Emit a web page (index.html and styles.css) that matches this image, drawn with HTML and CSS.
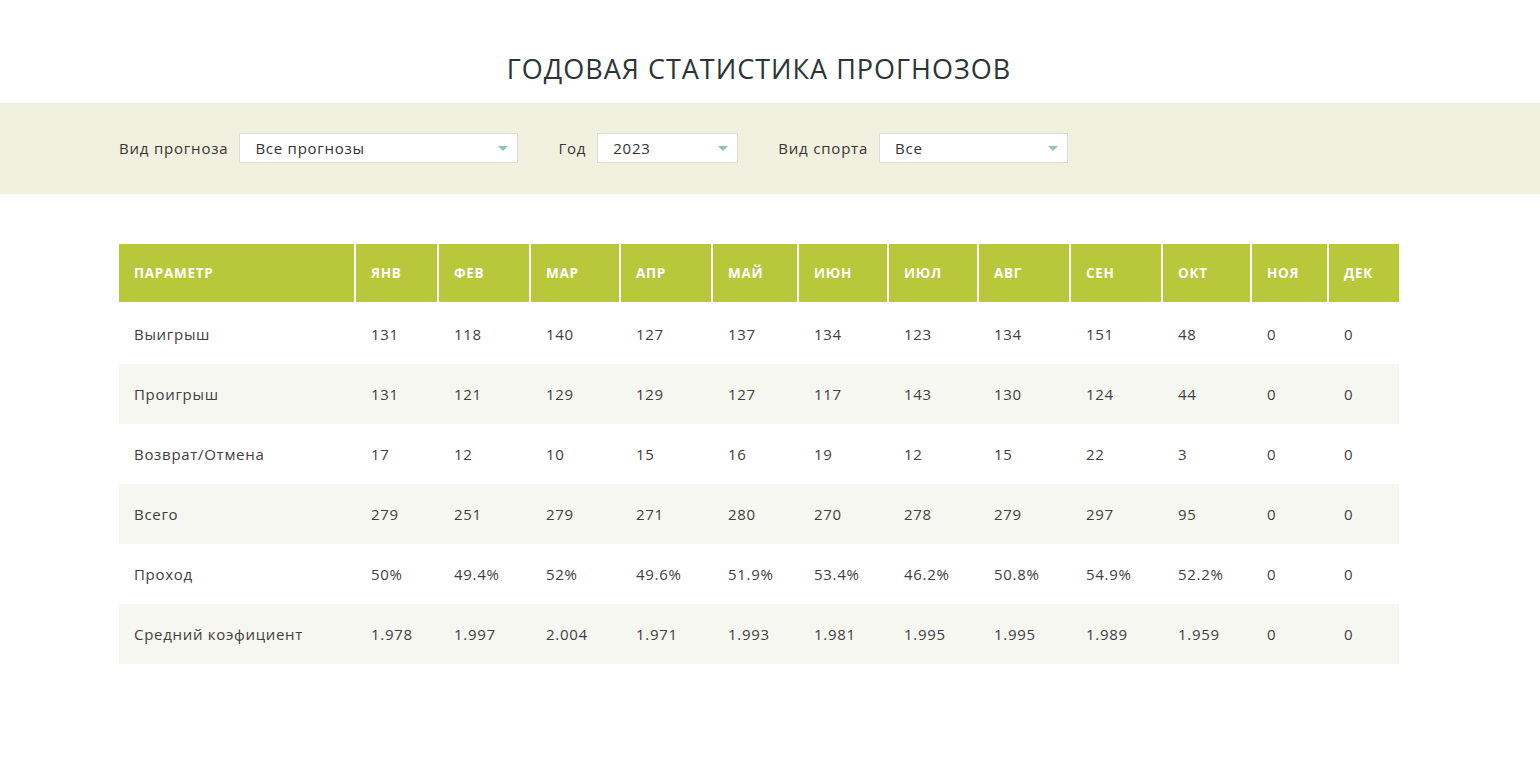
FILE: index.html
```html
<!DOCTYPE html>
<html lang="ru">
<head>
<meta charset="utf-8">
<title>Годовая статистика прогнозов</title>
<link rel="stylesheet" href="styles.css">
</head>
<body>
<header class="wrap">
  <h1 class="title">ГОДОВАЯ СТАТИСТИКА ПРОГНОЗОВ</h1>
</header>
<section class="filters">
  <div class="wrap filters-row">
    <div class="field">
      <span class="label">Вид прогноза</span>
      <div class="select select-type"><span>Все прогнозы</span><i class="arrow"></i></div>
    </div>
    <div class="field">
      <span class="label">Год</span>
      <div class="select select-year"><span>2023</span><i class="arrow"></i></div>
    </div>
    <div class="field">
      <span class="label">Вид спорта</span>
      <div class="select select-sport"><span>Все</span><i class="arrow"></i></div>
    </div>
  </div>
</section>
<main class="wrap">
  <table class="stats">
    <colgroup>
      <col class="c-param"><col class="c83"><col class="c92"><col class="c90"><col class="c92"><col class="c86"><col class="c90"><col class="c90"><col class="c92"><col class="c92"><col class="c89"><col class="c77"><col class="c72">
    </colgroup>
    <thead>
      <tr><th>Параметр</th><th>Янв</th><th>Фев</th><th>Мар</th><th>Апр</th><th>Май</th><th>Июн</th><th>Июл</th><th>Авг</th><th>Сен</th><th>Окт</th><th>Ноя</th><th>Дек</th></tr>
    </thead>
    <tbody>
      <tr><td>Выигрыш</td><td>131</td><td>118</td><td>140</td><td>127</td><td>137</td><td>134</td><td>123</td><td>134</td><td>151</td><td>48</td><td>0</td><td>0</td></tr>
      <tr><td>Проигрыш</td><td>131</td><td>121</td><td>129</td><td>129</td><td>127</td><td>117</td><td>143</td><td>130</td><td>124</td><td>44</td><td>0</td><td>0</td></tr>
      <tr><td>Возврат/Отмена</td><td>17</td><td>12</td><td>10</td><td>15</td><td>16</td><td>19</td><td>12</td><td>15</td><td>22</td><td>3</td><td>0</td><td>0</td></tr>
      <tr><td>Всего</td><td>279</td><td>251</td><td>279</td><td>271</td><td>280</td><td>270</td><td>278</td><td>279</td><td>297</td><td>95</td><td>0</td><td>0</td></tr>
      <tr><td>Проход</td><td>50%</td><td>49.4%</td><td>52%</td><td>49.6%</td><td>51.9%</td><td>53.4%</td><td>46.2%</td><td>50.8%</td><td>54.9%</td><td>52.2%</td><td>0</td><td>0</td></tr>
      <tr><td>Средний коэфициент</td><td>1.978</td><td>1.997</td><td>2.004</td><td>1.971</td><td>1.993</td><td>1.981</td><td>1.995</td><td>1.995</td><td>1.989</td><td>1.959</td><td>0</td><td>0</td></tr>
    </tbody>
  </table>
</main>
</body>
</html>
```
FILE: styles.css
```css
* { box-sizing: border-box; }
html, body { margin: 0; padding: 0; background: #fff; }
body {
  font-family: "Open Sans", "Liberation Sans", sans-serif;
  color: #333;
}
.wrap {
  width: 1302px;
  margin: 0 auto;
  padding-right: 22px;
}
.title {
  margin: 0;
  padding: 52px 0 0;
  height: 103px;
  text-align: center;
  font-size: 27px;
  font-weight: 500;
  letter-spacing: 1px;
  color: #2b3535;
  line-height: 34px;
}
.filters {
  background: #f0f1de;
  height: 91px;
}
.filters-row {
  display: flex;
  align-items: center;
  height: 89px;
  gap: 40px;
}
.field {
  display: flex;
  align-items: center;
  gap: 11px;
}
.label {
  font-size: 15px;
  letter-spacing: 0.8px;
  color: #3b3434;
}
.select {
  position: relative;
  height: 30px;
  background: #fff;
  border: 1px solid #dcdcdc;
  display: flex;
  align-items: center;
  padding-left: 15px;
  font-size: 15px;
  letter-spacing: 0.75px;
  color: #333;
}
.select-type { width: 279px; }
.select-year { width: 141px; }
.select-sport { width: 189px; }
.arrow {
  position: absolute;
  right: 9px;
  top: 12px;
  width: 0;
  height: 0;
  border-left: 5px solid transparent;
  border-right: 5px solid transparent;
  border-top: 5px solid #8cc7b0;
}
main.wrap { padding-top: 50px; }
.stats {
  width: 1280px;
  table-layout: fixed;
  border-collapse: separate;
  border-spacing: 0;
}
.c-param { width: 235px; }
.c83 { width: 83px; }
.c92 { width: 92px; }
.c90 { width: 90px; }
.c86 { width: 86px; }
.c89 { width: 89px; }
.c77 { width: 77px; }
.c72 { width: 72px; }
.stats th {
  background: #b9c83b;
  color: #fff;
  font-size: 13.5px;
  font-weight: 700;
  text-transform: uppercase;
  text-align: left;
  height: 60px;
  padding: 0 0 0 15px;
  border-bottom: 2px solid #fff;
  border-left: 2px solid #fff;
  letter-spacing: 0.7px;
}
.stats th:first-child { border-left: 0; }
.stats td {
  height: 60px;
  padding: 0 0 0 15px;
  font-size: 15px;
  font-weight: 400;
  letter-spacing: 0.7px;
  color: #404040;
  text-align: left;
  border-left: 2px solid transparent;
}
.stats td:first-child { border-left: 0; }
.stats tbody tr:nth-child(even) td { background: #f7f7f2; }
```
